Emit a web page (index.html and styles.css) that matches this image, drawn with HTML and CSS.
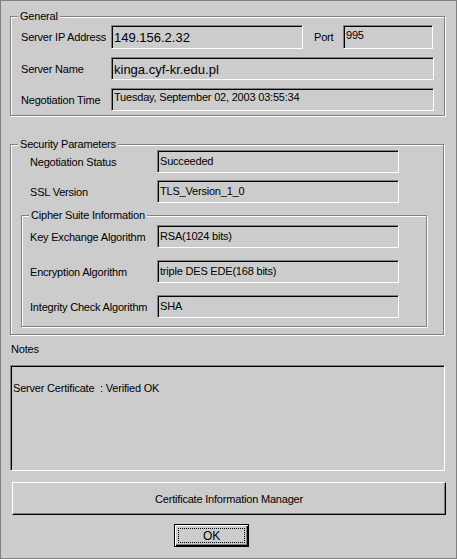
FILE: index.html
```html
<!DOCTYPE html>
<html lang="en">
<head>
    <meta charset="UTF-8">
    <title>Connection Information</title>
    <link rel="stylesheet" href="styles.css">
</head>
<body>
    <div class="dialog">
        <!-- General -->
        <fieldset class="group general">
            <legend>General</legend>
            <div class="group-body">
                <div class="row first">
                    <span class="label">Server IP Address</span>
                    <div class="field big ip">149.156.2.32</div>
                    <span class="label port-label">Port</span>
                    <div class="field port">995</div>
                </div>
                <div class="row">
                    <span class="label">Server Name</span>
                    <div class="field big wide">kinga.cyf-kr.edu.pl</div>
                </div>
                <div class="row">
                    <span class="label">Negotiation Time</span>
                    <div class="field wide time">Tuesday, September 02, 2003 03:55:34</div>
                </div>
            </div>
        </fieldset>

        <!-- Security Parameters -->
        <fieldset class="group security">
            <legend>Security Parameters</legend>
            <div class="group-body">
                <div class="row sec-row">
                    <span class="label">Negotiation Status</span>
                    <div class="field">Succeeded</div>
                </div>
                <div class="row sec-row">
                    <span class="label">SSL Version</span>
                    <div class="field">TLS_Version_1_0</div>
                </div>

                <fieldset class="group cipher">
                    <legend>Cipher Suite Information</legend>
                    <div class="group-body">
                        <div class="row">
                            <span class="label">Key Exchange Algorithm</span>
                            <div class="field">RSA(1024 bits)</div>
                        </div>
                        <div class="row">
                            <span class="label">Encryption Algorithm</span>
                            <div class="field">triple DES EDE(168 bits)</div>
                        </div>
                        <div class="row">
                            <span class="label">Integrity Check Algorithm</span>
                            <div class="field">SHA</div>
                        </div>
                    </div>
                </fieldset>
            </div>
        </fieldset>

        <!-- Notes -->
        <div class="notes-label">Notes</div>
        <div class="notes">Server Certificate&nbsp; : Verified OK</div>

        <button class="btn cert-btn">Certificate Information Manager</button>
        <button class="btn ok-btn"><span class="focus">OK</span></button>
    </div>
</body>
</html>
```

FILE: styles.css
```css
/* Global styles */
body {
    margin: 0;
    background: #cccccc;
    font-family: "Liberation Sans", Arial, sans-serif;
    font-size: 11px;
    letter-spacing: -0.2px;
    color: #000;
}

/* Dialog frame */
.dialog {
    width: 457px;
    height: 559px;
    box-sizing: border-box;
    border: 1px solid #808080;
    padding: 0 0 0 9px;
    background: #cccccc;
}

/* Etched group boxes */
.group {
    margin: 0;
    padding: 0;
    border: 1px solid #808080;
    box-shadow: inset 1px 1px 0 #fff, 1px 1px 0 #fff;
    box-sizing: border-box;
    min-width: 0;
}

.group legend {
    margin-left: 7px;
    padding: 0 2px;
    line-height: 12px;
    background: #cccccc;
}

.general {
    margin-top: 9px;
    width: 435px;
}

.general .group-body {
    padding: 3px 10px 4px 10px;
}

.security {
    margin-top: 22px;
    width: 434px;
}

.security .group-body {
    padding: 0 0 7px 10px;
}

.cipher {
    margin-top: 6px;
    width: 406px;
}

.cipher .group-body {
    padding: 4px 0 8px 8px;
    display: flex;
    flex-direction: column;
    gap: 12px;
}

/* Rows */
.row {
    display: flex;
    align-items: center;
    height: 23px;
}

.general .row + .row {
    margin-top: 8px;
}

.general .row.first {
    height: 24px;
}

.general .label {
    width: 90px;
}

.sec-row {
    padding-left: 9px;
}

.sec-row + .sec-row {
    margin-top: 7px;
}

.security .label {
    width: 127px;
}

.port-label {
    margin-left: 11px;
    width: 29px !important;
}

.label {
    flex-shrink: 0;
    white-space: nowrap;
}

/* Read-only sunken fields */
.field {
    box-sizing: border-box;
    height: 100%;
    width: 242px;
    border: 1px solid;
    border-color: #808080 #fff #fff #808080;
    box-shadow: inset 1px 1px 0 #000;
    padding: 4px 0 0 2px;
    line-height: 13px;
    white-space: nowrap;
    overflow: hidden;
}

.field.big {
    font-size: 13px;
    letter-spacing: 0;
    line-height: 16px;
    padding-top: 4px;
}

.field.ip {
    width: 192px;
}

.field.port {
    width: 90px;
    padding-top: 3px;
}

.field.wide {
    width: 323px;
}

.field.time {
    padding-top: 2px;
}

/* Notes */
.notes-label {
    margin-top: 8px;
    line-height: 13px;
    padding-left: 1px;
}

.notes {
    margin-top: 9px;
    width: 435px;
    height: 106px;
    box-sizing: border-box;
    border: 1px solid;
    border-color: #808080 #fff #fff #808080;
    box-shadow: inset 1px 1px 0 #000;
    padding: 16px 0 0 2px;
    line-height: 13px;
}

/* Buttons */
.btn {
    display: block;
    box-sizing: border-box;
    font-family: "Liberation Sans", Arial, sans-serif;
    font-size: 11px;
    letter-spacing: -0.2px;
    color: #000;
    background: #cccccc;
    border: 1px solid;
    border-color: #fff #000 #000 #fff;
    box-shadow: inset -1px -1px 0 #808080;
    padding: 0;
    cursor: pointer;
}

.cert-btn {
    margin: 11px 0 0 2px;
    width: 434px;
    height: 33px;
}

.ok-btn {
    margin: 9px 0 0 164px;
    width: 75px;
    height: 23px;
    border: 1px solid #000;
    box-shadow: inset 1px 1px 0 #fff, inset -1px -1px 0 #000, inset -2px -2px 0 #808080;
    padding: 3px;
}

.ok-btn .focus {
    display: flex;
    align-items: center;
    justify-content: center;
    height: 100%;
    border: 1px dotted #000;
    box-sizing: border-box;
    font-size: 12px;
}
```
